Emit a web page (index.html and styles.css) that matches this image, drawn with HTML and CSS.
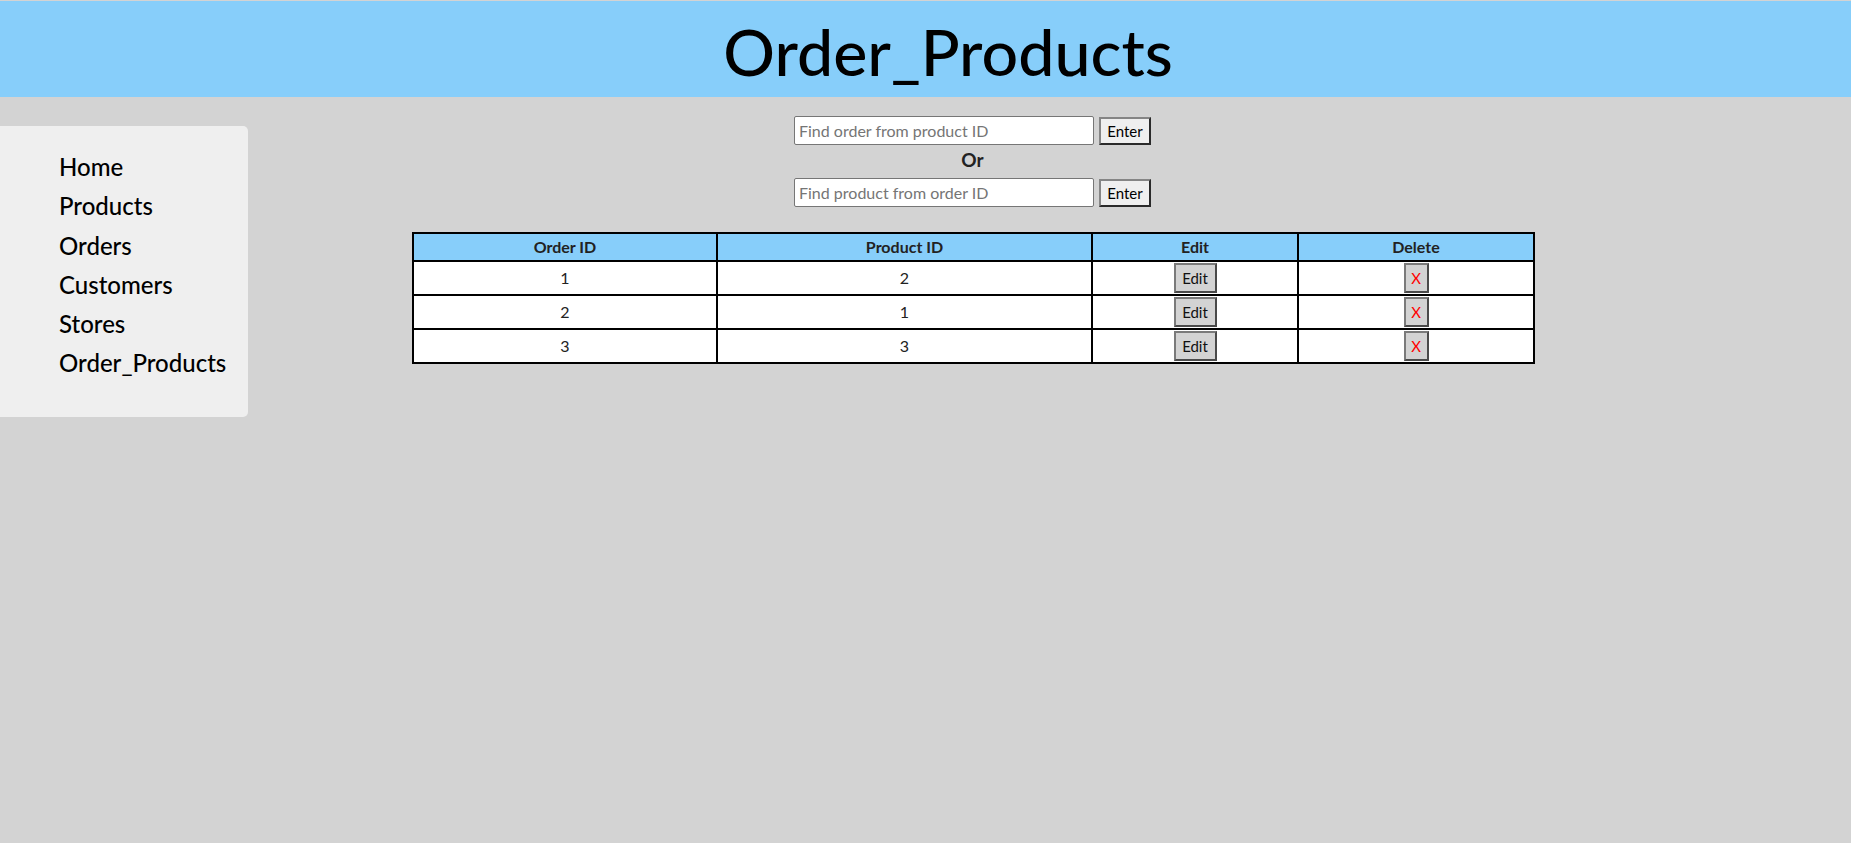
FILE: index.html
```html
<!DOCTYPE html>
<html lang="en">
<head>
<meta charset="utf-8">
<title>Order_Products</title>
<link rel="stylesheet" href="styles.css">
</head>
<body>
<header class="topbar">
  <h1 class="title">Order_Products</h1>
</header>
<div class="layout">
  <nav class="sidebar">
    <ul class="nav-list">
      <li><a class="nav-link" href="#">Home</a></li>
      <li><a class="nav-link" href="#">Products</a></li>
      <li><a class="nav-link" href="#">Orders</a></li>
      <li><a class="nav-link" href="#">Customers</a></li>
      <li><a class="nav-link" href="#">Stores</a></li>
      <li><a class="nav-link" href="#">Order_Products</a></li>
    </ul>
  </nav>
  <main class="main">
    <div class="content">
      <div class="search-row">
        <input class="search-input" type="text" placeholder="Find order from product ID">
        <button class="enter-btn" type="button">Enter</button>
      </div>
      <div class="or-text">Or</div>
      <div class="search-row">
        <input class="search-input" type="text" placeholder="Find product from order ID">
        <button class="enter-btn" type="button">Enter</button>
      </div>
      <table class="data-table">
        <colgroup>
          <col class="col-order">
          <col class="col-product">
          <col class="col-edit">
          <col class="col-delete">
        </colgroup>
        <thead>
          <tr><th>Order ID</th><th>Product ID</th><th>Edit</th><th>Delete</th></tr>
        </thead>
        <tbody>
          <tr><td>1</td><td>2</td><td><button class="edit-btn" type="button">Edit</button></td><td><button class="del-btn" type="button">X</button></td></tr>
          <tr><td>2</td><td>1</td><td><button class="edit-btn" type="button">Edit</button></td><td><button class="del-btn" type="button">X</button></td></tr>
          <tr><td>3</td><td>3</td><td><button class="edit-btn" type="button">Edit</button></td><td><button class="del-btn" type="button">X</button></td></tr>
        </tbody>
      </table>
    </div>
  </main>
</div>
</body>
</html>
```
FILE: styles.css
```css
html, body {
  margin: 0;
  padding: 0;
}
body {
  background: #d3d3d3;
  font-family: Lato, "Open Sans", sans-serif;
  color: #000;
}
.topbar {
  margin-top: 1px;
  height: 96px;
  background: #87cefa;
  padding-left: 45px;
  box-sizing: border-box;
  text-align: center;
}
.title {
  margin: 0;
  padding-top: 4px;
  font-size: 64.5px;
  line-height: 92px;
  font-weight: 500;
  color: #000;
}
.layout {
  display: flex;
  align-items: flex-start;
}
.sidebar {
  flex: 0 0 248px;
  width: 248px;
  margin-top: 29px;
  background: #efefef;
  border-radius: 0 5px 5px 0;
  padding: 21px 0 34px 0;
  box-sizing: border-box;
}
.nav-list {
  list-style: none;
  margin: 0;
  padding: 0 0 0 59px;
}
.nav-list li {
  font-size: 24px;
  line-height: 39.3px;
  font-weight: 500;
}
.nav-link {
  color: #000;
  text-decoration: none;
}
.main {
  flex: 1 1 auto;
  margin-top: 19px;
  padding-left: 164px;
}
.content {
  width: 1121px;
}
.search-row {
  display: flex;
  justify-content: center;
  align-items: center;
  gap: 5px;
}
.search-input {
  width: 300px;
  height: 29px;
  box-sizing: border-box;
  border: 1px solid #767676;
  border-radius: 2px;
  padding: 0 4px;
  font-family: Lato, "Open Sans", sans-serif;
  font-size: 16px;
  background: #fff;
  color: #000;
}
.search-input::placeholder {
  color: #757575;
}
.enter-btn {
  width: 52px;
  height: 28px;
  box-sizing: border-box;
  background: #efefef;
  border-style: solid;
  border-width: 2px;
  border-color: #858585 #2a2a2a #2a2a2a #858585;
  padding: 0;
  font-family: Lato, "Open Sans", sans-serif;
  font-size: 15px;
  color: #000;
}
.or-text {
  text-align: center;
  padding-bottom: 3px;
  line-height: 30px;
  font-size: 19px;
  font-weight: 700;
  color: #222;
}
.data-table {
  margin-top: 25px;
  width: 1121px;
  border-collapse: collapse;
  border: 2px solid #000;
  table-layout: fixed;
  background: #fff;
  color: #222;
  font-size: 16px;
}
.col-order { width: 304px; }
.col-product { width: 375px; }
.col-edit { width: 206px; }
.col-delete { width: 236px; }
.data-table th,
.data-table td {
  border: 2px solid #000;
  text-align: center;
}
.data-table th {
  background: #87cefa;
  font-weight: 700;
  padding: 2px;
  line-height: 22px;
}
.data-table td {
  padding: 1px;
  line-height: 30px;
}
.edit-btn,
.del-btn {
  height: 30px;
  box-sizing: border-box;
  vertical-align: top;
  background: #d3d3d3;
  border-style: solid;
  border-width: 2px;
  border-color: #7a7a7a #4a4a4a #4a4a4a #7a7a7a;
  padding: 0;
  font-family: Lato, "Open Sans", sans-serif;
  font-size: 15px;
}
.edit-btn {
  width: 43px;
  color: #111;
}
.del-btn {
  width: 25px;
  color: #f00;
}
```
